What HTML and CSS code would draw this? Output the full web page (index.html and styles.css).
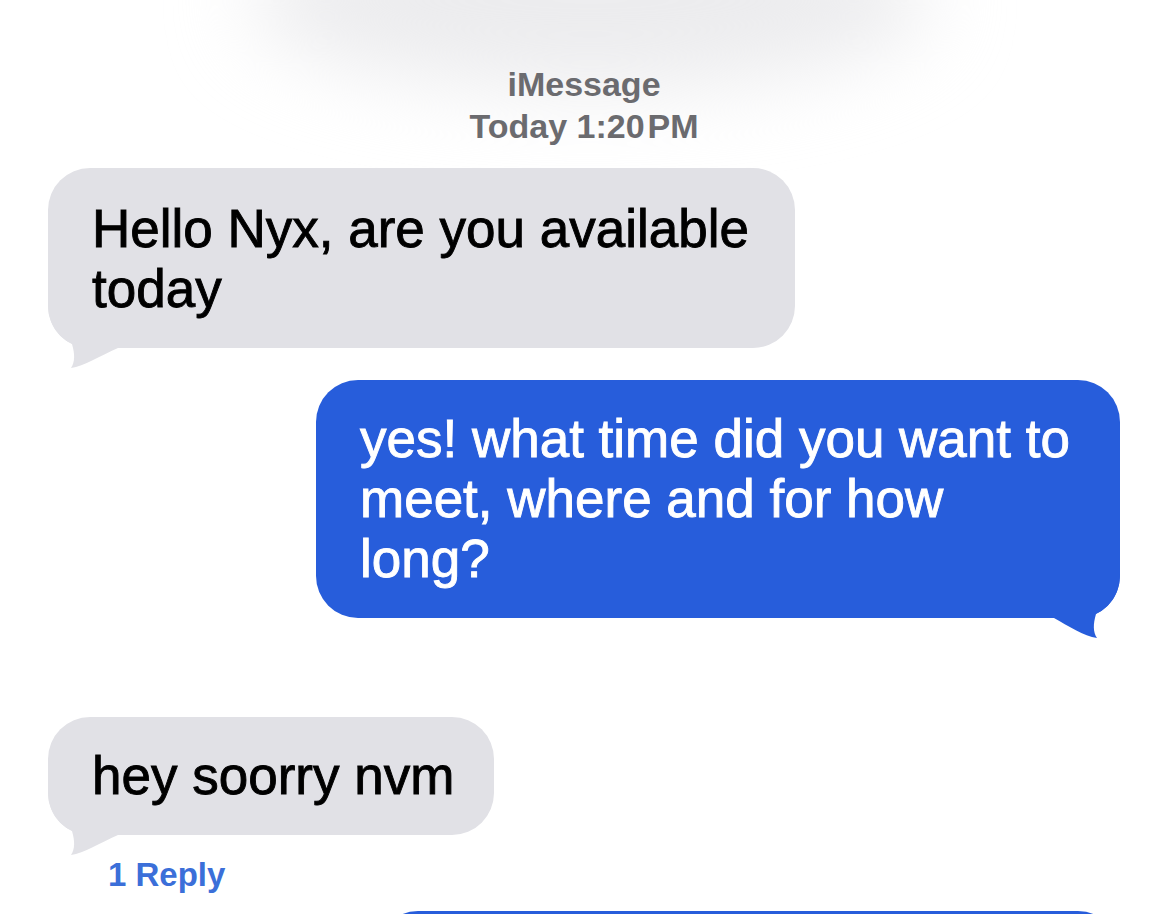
FILE: index.html
```html
<!DOCTYPE html>
<html lang="en">
<head>
  <meta charset="UTF-8">
  <meta name="viewport" content="width=device-width, initial-scale=1.0">
  <title>iMessage</title>
  <link rel="stylesheet" href="styles.css">
</head>
<body>
  <div class="top-blur"></div>

  <div class="thread">
    <div class="stamp">
      <div class="service">iMessage</div>
      <div class="time">Today 1:20&#8202;PM</div>
    </div>

    <div class="bubble in first">
      <svg class="tail" viewBox="0 -44 80 66" width="80" height="66"><path d="M0,-44 C0,-22 12,-10 24,-4 C27,6 27,14 23,20 C36,18 52,8 70,0 L80,0 L80,-44 Z"/></svg>
      <span class="text">Hello Nyx, are you available today</span>
    </div>

    <div class="bubble out">
      <svg class="tail" viewBox="-80 -44 80 66" width="80" height="66"><path d="M0,-44 C0,-22 -12,-10 -24,-4 C-27,6 -27,14 -23,20 C-36,18 -52,8 -66,0 L-80,0 L-80,-44 Z"/></svg>
      <span class="text">yes! what time did you want to meet, where and for how long?</span>
    </div>

    <div class="bubble in second">
      <svg class="tail" viewBox="0 -44 80 66" width="80" height="66"><path d="M0,-44 C0,-22 12,-10 24,-4 C27,6 27,14 23,20 C36,18 52,8 70,0 L80,0 L80,-44 Z"/></svg>
      <span class="text">hey soorry nvm</span>
    </div>
    <div class="reply">1 Reply</div>

    <div class="bubble out last">
      <span class="text">no worries at all, talk soon :)</span>
    </div>
  </div>
</body>
</html>
```

FILE: styles.css
```css
* {
  margin: 0;
  padding: 0;
  box-sizing: border-box;
}
body {
  background: #fff;
  font-family: 'Liberation Sans', Arial, sans-serif;
  color: #000;
  overflow: hidden;
  position: relative;
}
.top-blur {
  position: absolute;
  top: -90px;
  left: 250px;
  width: 680px;
  height: 180px;
  background: #ececee;
  border-radius: 50%;
  filter: blur(40px);
}
.thread {
  position: relative;
  display: flex;
  flex-direction: column;
  padding: 0 50px 0 48px;
}
.stamp {
  margin-top: 63px;
  text-align: center;
  color: #6b6b6f;
  font-size: 34px;
  font-weight: bold;
  line-height: 42px;
}
.bubble {
  position: relative;
  width: fit-content;
  font-size: 53px;
  line-height: 60px;
  padding: 29px 40px 29px 44px;
  border-radius: 42px;
  -webkit-text-stroke: 0.9px currentColor;
}
.bubble .text {
  position: relative;
}
.bubble .tail {
  position: absolute;
  bottom: -22px;
  display: block;
}
.in {
  align-self: flex-start;
  background: #e1e1e6;
  max-width: 747px;
}
.in .tail {
  left: 0;
  fill: #e1e1e6;
}
.out {
  align-self: flex-end;
  background: #275ddb;
  color: #fff;
  max-width: 804px;
}
.out .tail {
  right: 0;
  fill: #275ddb;
}
.first {
  margin-top: 21px;
  padding-top: 31px;
}
.out {
  margin-top: 32px;
}
.second {
  margin-top: 99px;
}
.reply {
  margin: 20px 0 0 60px;
  color: #3b6fd9;
  font-size: 33px;
  font-weight: bold;
  line-height: 40px;
}
.out.last {
  margin-top: 16px;
}
```
